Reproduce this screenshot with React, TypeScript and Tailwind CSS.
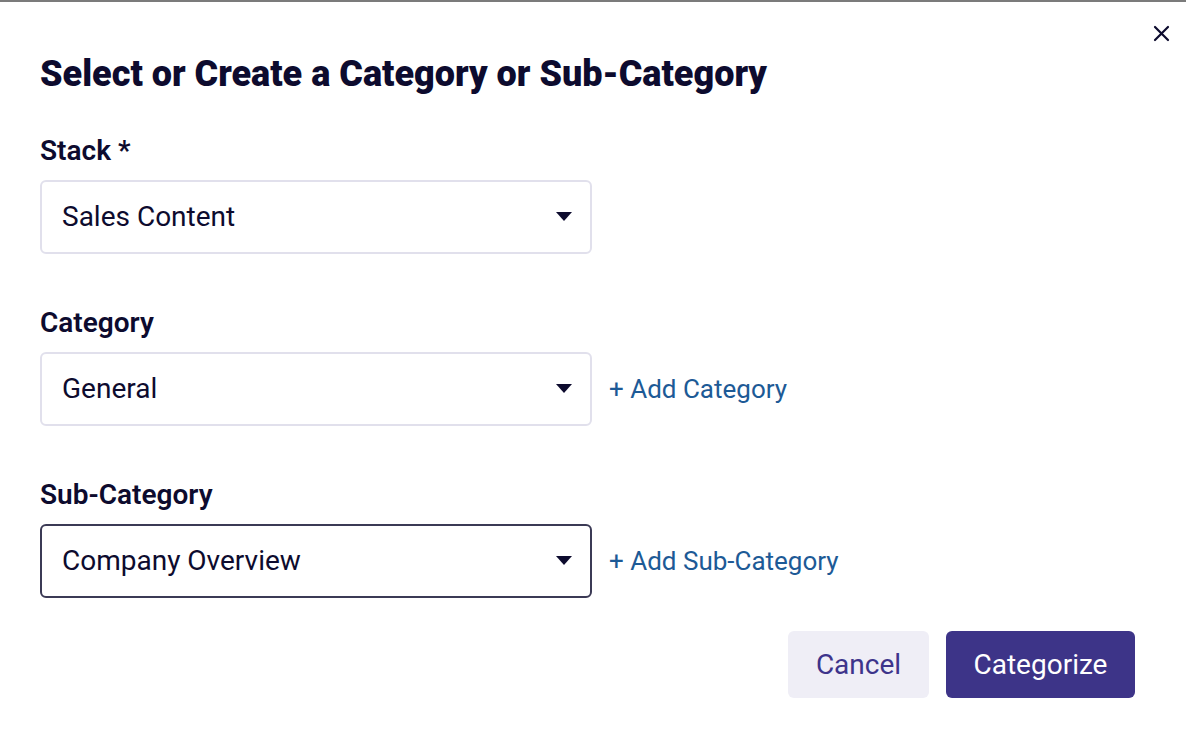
import { useState } from 'react';

const navy = 'text-[#0d0b2e]';

function SelectBox({ value, active }: { value: string; active?: boolean }) {
  return (
    <div
      className={`w-[552px] h-[74px] rounded-[6px] bg-white flex items-center justify-between pl-[20px] pr-[18px] border-2 ${
        active ? 'border-[#3b3a55]' : 'border-[#e1e0ec]'
      }`}
    >
      <span className={`text-[28px] ${navy}`}>{value}</span>
      <svg width="16" height="10" viewBox="0 0 16 10">
        <path d="M0 0 L16 0 L8 9 Z" fill="#0d0b2e" />
      </svg>
    </div>
  );
}

export default function App() {
  const [stack] = useState('Sales Content');

  const fields = [
    { label: 'Stack *', value: stack },
    { label: 'Category', value: 'General', add: '+ Add Category' },
    { label: 'Sub-Category', value: 'Company Overview', add: '+ Add Sub-Category', active: true },
  ];

  return (
    <div className="min-h-screen bg-white border-t-2 border-[#7b7b7b] relative font-['Roboto',sans-serif]">
      {/* Close */}
      <button className="absolute top-[22px] right-[16px] w-[18px] h-[18px] flex items-center justify-center">
        <svg width="17" height="17" viewBox="0 0 17 17">
          <path d="M2 2 L15 15 M15 2 L2 15" stroke="#0d0b2e" strokeWidth="2.2" strokeLinecap="round" />
        </svg>
      </button>

      <div className="pl-10 pr-[51px] pt-[50px]">
        <h1 className={`text-[36px] leading-[44px] font-black ${navy}`}>
          Select or Create a Category or Sub-Category
        </h1>

        <div className="mt-[39px] flex flex-col gap-[53px]">
          {fields.map((f) => (
            <div key={f.label}>
              <div className={`text-[28px] leading-[32px] font-semibold ${navy} mb-[13px]`}>{f.label}</div>
              <div className="flex items-center gap-[17px]">
                <SelectBox value={f.value} active={f.active} />
                {f.add && <a className="text-[26px] text-[#1d5a96] cursor-pointer">{f.add}</a>}
              </div>
            </div>
          ))}
        </div>

        <div className="mt-[33px] flex justify-end gap-[17px]">
          <button className="w-[141px] h-[67px] rounded-[6px] bg-[#efeef6] text-[#3d348b] text-[28px]">
            Cancel
          </button>
          <button className="w-[189px] h-[67px] rounded-[6px] bg-[#3d3488] text-white text-[28px]">
            Categorize
          </button>
        </div>
      </div>
    </div>
  );
}
